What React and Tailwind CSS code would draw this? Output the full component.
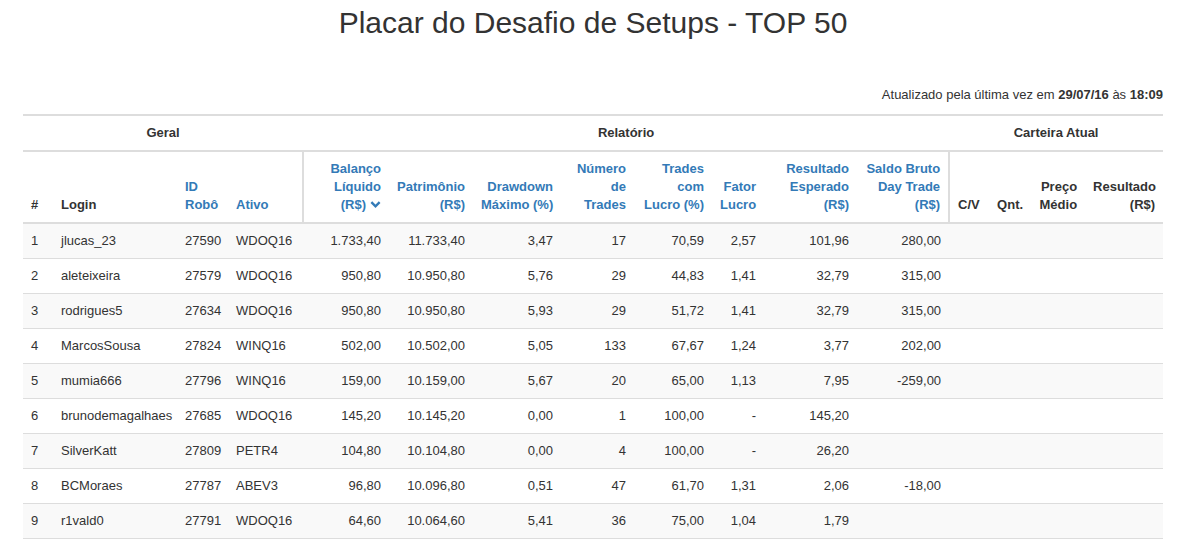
import { useMemo } from "react";

const font = { fontFamily: '"Liberation Sans", Arial, sans-serif' };

const columns = [
  { key: "pos", label: ["#"], w: "w-[30px]", align: "text-left", link: false },
  { key: "login", label: ["Login"], w: "w-[124px]", align: "text-left", link: false },
  { key: "robo", label: ["ID", "Robô"], w: "w-[51px]", align: "text-left", link: true },
  { key: "ativo", label: ["Ativo"], w: "w-[75px]", align: "text-left", link: true },
  { key: "balanco", label: ["Balanço", "Líquido", "(R$)"], w: "w-[86px]", align: "text-right", link: true, sorted: true, divider: true },
  { key: "patrimonio", label: ["Patrimônio", "(R$)"], w: "w-[84px]", align: "text-right", link: true },
  { key: "drawdown", label: ["Drawdown", "Máximo (%)"], w: "w-[88px]", align: "text-right", link: true },
  { key: "trades", label: ["Número", "de", "Trades"], w: "w-[73px]", align: "text-right", link: true },
  { key: "lucro", label: ["Trades", "com", "Lucro (%)"], w: "w-[78px]", align: "text-right", link: true },
  { key: "fator", label: ["Fator", "Lucro"], w: "w-[52px]", align: "text-right", link: true },
  { key: "esperado", label: ["Resultado", "Esperado", "(R$)"], w: "w-[93px]", align: "text-right", link: true },
  { key: "saldo", label: ["Saldo Bruto", "Day Trade", "(R$)"], w: "w-[92px]", align: "text-right", link: true },
  { key: "cv", label: ["C/V"], w: "w-[40px]", align: "text-left", link: false, divider: true },
  { key: "qnt", label: ["Qnt."], w: "w-[41px]", align: "text-left", link: false },
  { key: "preco", label: ["Preço", "Médio"], w: "w-[55px]", align: "text-right", link: false },
  { key: "resultado", label: ["Resultado", "(R$)"], w: "w-[78px]", align: "text-right", link: false },
];

const rows = [
  ["1", "jlucas_23", "27590", "WDOQ16", "1.733,40", "11.733,40", "3,47", "17", "70,59", "2,57", "101,96", "280,00"],
  ["2", "aleteixeira", "27579", "WDOQ16", "950,80", "10.950,80", "5,76", "29", "44,83", "1,41", "32,79", "315,00"],
  ["3", "rodrigues5", "27634", "WDOQ16", "950,80", "10.950,80", "5,93", "29", "51,72", "1,41", "32,79", "315,00"],
  ["4", "MarcosSousa", "27824", "WINQ16", "502,00", "10.502,00", "5,05", "133", "67,67", "1,24", "3,77", "202,00"],
  ["5", "mumia666", "27796", "WINQ16", "159,00", "10.159,00", "5,67", "20", "65,00", "1,13", "7,95", "-259,00"],
  ["6", "brunodemagalhaes", "27685", "WDOQ16", "145,20", "10.145,20", "0,00", "1", "100,00", "-", "145,20", ""],
  ["7", "SilverKatt", "27809", "PETR4", "104,80", "10.104,80", "0,00", "4", "100,00", "-", "26,20", ""],
  ["8", "BCMoraes", "27787", "ABEV3", "96,80", "10.096,80", "0,51", "47", "61,70", "1,31", "2,06", "-18,00"],
  ["9", "r1vald0", "27791", "WDOQ16", "64,60", "10.064,60", "5,41", "36", "75,00", "1,04", "1,79", ""],
];

function Chevron() {
  return (
    <svg viewBox="0 0 12 12" className="inline-block w-[11px] h-[11px] ml-[4px] align-[-1px]">
      <path d="M1.5 3.5 L6 8 L10.5 3.5" fill="none" stroke="#337ab7" strokeWidth="2.6" strokeLinejoin="miter" />
    </svg>
  );
}

export default function App() {
  const fullRows = useMemo(() => rows.map((r) => [...r, "", "", "", ""]), []);

  return (
    <div className="h-[545px] overflow-hidden bg-white text-[#333] text-[13px] leading-[18px]" style={font}>
      <div className="w-[1140px] mx-auto">
        <h1 className="mt-[6px] text-center text-[30px] leading-[33px] font-normal text-[#333]">
          Placar do Desafio de Setups - TOP 50
        </h1>
        <p className="mt-[47px] mb-[10px] text-right">
          Atualizado pela última vez em <b>29/07/16</b> às <b>18:09</b>
        </p>
        <table className="w-full table-fixed border-collapse">
          <colgroup>
            {columns.map((c) => (
              <col key={c.key} className={c.w} />
            ))}
          </colgroup>
          <thead>
            <tr className="border-t-2 border-[#ddd]">
              <th colSpan={4} className="p-[8px] border-b-2 border-[#ddd] text-center font-bold">Geral</th>
              <th colSpan={8} className="p-[8px] border-b-2 border-[#ddd] text-center font-bold">Relatório</th>
              <th colSpan={4} className="p-[8px] border-b-2 border-[#ddd] text-center font-bold">Carteira Atual</th>
            </tr>
            <tr>
              {columns.map((c) => (
                <th
                  key={c.key}
                  className={`p-[8px] align-bottom font-bold border-b-2 border-[#ddd] ${c.align} ${c.divider ? "border-l-2" : ""} ${c.link ? "text-[#337ab7]" : "text-[#333]"}`}
                >
                  {c.label.map((line, i) => (
                    <div key={i} className="whitespace-nowrap">
                      {line}
                      {c.sorted && i === c.label.length - 1 ? <Chevron /> : null}
                    </div>
                  ))}
                </th>
              ))}
            </tr>
          </thead>
          <tbody>
            {fullRows.map((r, ri) => (
              <tr key={ri} className={`border-t border-[#ddd] ${ri % 2 === 0 ? "bg-[#f9f9f9]" : "bg-white"} ${ri === fullRows.length - 1 ? "border-b" : ""}`}>
                {r.map((v, ci) => (
                  <td key={ci} className={`p-[8px] whitespace-nowrap ${columns[ci].align}`}>
                    {v}
                  </td>
                ))}
              </tr>
            ))}
          </tbody>
        </table>
      </div>
    </div>
  );
}
